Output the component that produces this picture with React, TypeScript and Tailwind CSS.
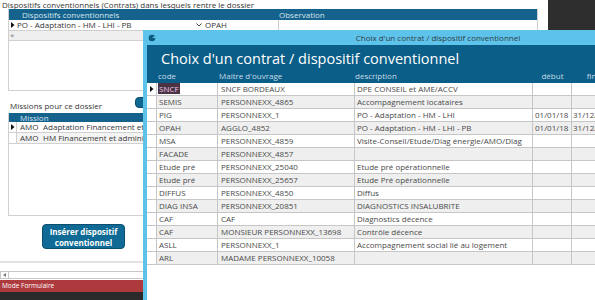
const contracts: [string, string, string, string, string][] = [
  ['SNCF', 'SNCF BORDEAUX', 'DPE CONSEIL et AME/ACCV', '', ''],
  ['SEMIS', 'PERSONNEXX_4865', 'Accompagnement locataires', '', ''],
  ['PIG', 'PERSONNEXX_1', 'PO - Adaptation - HM - LHI', '01/01/18', '31/12/18'],
  ['OPAH', 'AGGLO_4852', 'PO - Adaptation - HM - LHI - PB', '01/01/18', '31/12/18'],
  ['MSA', 'PERSONNEXX_4859', 'Visite-Conseil/Etude/Diag énergie/AMO/Diag', '', ''],
  ['FACADE', 'PERSONNEXX_4857', '', '', ''],
  ['Etude pré', 'PERSONNEXX_25040', 'Etude pré opérationnelle', '', ''],
  ['Etude pré', 'PERSONNEXX_25657', 'Etude Pré opérationnelle', '', ''],
  ['DIFFUS', 'PERSONNEXX_4850', 'Diffus', '', ''],
  ['DIAG INSA', 'PERSONNEXX_20851', 'DIAGNOSTICS INSALUBRITE', '', ''],
  ['CAF', 'CAF', 'Diagnostics décence', '', ''],
  ['CAF', 'MONSIEUR PERSONNEXX_13698', 'Contrôle décence', '', ''],
  ['ASLL', 'PERSONNEXX_1', 'Accompagnement social lié au logement', '', ''],
  ['ARL', 'MADAME PERSONNEXX_10058', '', '', ''],
];

function RowArrow() {
  return (
    <svg width="4" height="6" viewBox="0 0 4 6" className="shrink-0">
      <path d="M0 0 L3.5 3 L0 6 Z" fill="#111" />
    </svg>
  );
}

function MainForm() {
  return (
    <div className="w-[548px] bg-white flex flex-col text-[#363636]">
      <p className="h-[9px] leading-[9px] pl-[2px] whitespace-nowrap">Dispositifs conventionnels (Contrats) dans lesquels rentre le dossier</p>

      {/* contrats subform */}
      <div className="ml-[8px] w-[530px] h-[82px] border-x border-b border-[#d0d0d0] flex flex-col">
        <div className="h-[11px] leading-[11px] bg-[#15628d] text-[#d6e6f0] flex">
          <span className="w-[270px] pl-[13px]">Dispositifs conventionnels</span>
          <span>Observation</span>
        </div>
        <div className="h-[11px] leading-[10px] flex border-b border-[#d0d0d0]">
          <div className="w-[7px] flex items-center justify-center">
            <RowArrow />
          </div>
          <div className="w-[188px] flex items-center justify-between pr-[2px]">
            <span className="pl-[1px] leading-[10px]">PO - Adaptation - HM - LHI - PB</span>
            <svg width="6" height="4" viewBox="0 0 6 4">
              <path d="M0.5 0.5 L3 3 L5.5 0.5" fill="none" stroke="#444" strokeWidth="1" />
            </svg>
          </div>
          <div className="w-[75px] pl-[1px] border-r border-[#d0d0d0]">OPAH</div>
          <div className="flex-1" />
        </div>
        <div className="h-[10px] leading-[10px] bg-[#efefef] border-b border-[#d0d0d0] pl-[1px] text-[#888]">*</div>
      </div>

      {/* missions */}
      <div className="h-[22px] flex">
        <span className="w-[135px] pl-[10px] self-end mb-[2px] leading-[10px]">Missions pour ce dossier</span>
        <div className="mt-[6px] w-[70px] h-[11px] rounded-[4px] bg-[#0e6892] border border-[#0b4d6d]" />
      </div>
      <div className="ml-[8px] w-[530px] h-[103px] border-x border-b border-[#d0d0d0] flex flex-col">
        <div className="h-[9px] leading-[9px] bg-[#15628d] text-[#d6e6f0] pl-[11px]">Mission</div>
        <div className="h-[11px] leading-[10px] flex border-b border-[#d0d0d0] whitespace-nowrap overflow-hidden">
          <div className="w-[8px] flex items-center justify-center border-r border-[#d0d0d0]">
            <RowArrow />
          </div>
          <span className="w-[26px] pl-[3px]">AMO</span>
          <span>Adaptation Financement et administration</span>
        </div>
        <div className="h-[11px] leading-[10px] flex border-b border-[#d0d0d0] bg-[#f4f4f4] whitespace-nowrap overflow-hidden">
          <div className="w-[8px] border-r border-[#d0d0d0] bg-white" />
          <span className="w-[26px] pl-[3px]">AMO</span>
          <span>HM Financement et administration</span>
        </div>
      </div>

      <button className="mt-[8px] ml-[42px] w-[83px] h-[25px] rounded-[4px] bg-[#0f6b95] border border-[#0a4f70] text-white font-bold text-[8px] leading-[11px] flex flex-col items-center justify-center">
        <span>Insérer dispositif</span>
        <span>conventionnel</span>
      </button>

      <div className="mt-[12px] h-[2px] bg-[#e2e2e2]" />

      <div className="mt-[8px] h-[8px] border border-[#c8c8c8] flex">
        <div className="w-[8px] border-r border-[#c8c8c8] flex items-center justify-center">
          <svg width="3" height="4" viewBox="0 0 3 4">
            <path d="M3 0 L0 2 L3 4 Z" fill="#777" />
          </svg>
        </div>
      </div>
    </div>
  );
}

function ContractDialog() {
  return (
    <div className="absolute left-[143px] top-[30px] w-[590px] h-[280px] bg-[#5ec3ea] px-[4px] flex flex-col">
      <div className="h-[15px] flex items-center text-[#2f3d45]">
        <svg width="8" height="8" viewBox="0 0 8 8" className="shrink-0 ml-[1px]">
          <circle cx="4" cy="4" r="3.3" fill="#0c5b80" />
          <path d="M4 4 L7.5 1.2 L7.6 4 Z" fill="#5ec3ea" />
        </svg>
        <span className="flex-1 text-center leading-[15px]">Choix d'un contrat / dispositif conventionnel</span>
        <span className="w-[9px]" />
      </div>

      <div className="flex-1 bg-white flex flex-col">
        <div className="bg-[#0b5e87] pt-[4px] pb-[2px]">
          <h1 className="h-[20px] pl-[14px] text-[14.5px] leading-[20px] text-white font-normal">Choix d'un contrat / dispositif conventionnel</h1>
          <div className="mt-[2px] h-[10px] leading-[10px] flex text-[#c6dcea]">
            <div className="w-[10px]" />
            <div className="w-[61px] pl-[1px]">code</div>
            <div className="w-[137px] pl-[1px]">Maitre d'ouvrage</div>
            <div className="w-[178px]">description</div>
            <div className="w-[39px] text-center">début</div>
            <div className="w-[39px] text-center">fin</div>
          </div>
        </div>

        <div className="flex flex-col text-[#4a4a4a]">
          {contracts.map(([code, owner, desc, start, end], i) => (
            <div
              key={i}
              className={`h-[13px] leading-[12px] flex border-b border-[#c6c6c6] ${i % 2 === 1 ? 'bg-[#efefef]' : 'bg-white'}`}
            >
              <div className="w-[10px] bg-white border-r border-[#c6c6c6] flex items-center justify-center">
                {i === 0 && <RowArrow />}
              </div>
              <div className="w-[61px] pl-[1px] border-r border-[#c6c6c6] whitespace-nowrap overflow-hidden">
                {i === 0 ? (
                  <span className="bg-[#4b3346] text-[#f1c4e4] px-[1px]">{code}</span>
                ) : (
                  <span className="pl-[1px]">{code}</span>
                )}
              </div>
              <div className="w-[137px] pl-[3px] border-r border-[#c6c6c6] whitespace-nowrap overflow-hidden">{owner}</div>
              <div className="w-[178px] pl-[2px] border-r border-[#c6c6c6] whitespace-nowrap overflow-hidden">{desc}</div>
              <div className="w-[39px] pl-[2px] border-r border-[#c6c6c6] whitespace-nowrap overflow-hidden">{start}</div>
              <div className="w-[39px] pl-[1px] border-r border-[#c6c6c6] whitespace-nowrap overflow-hidden">{end}</div>
              <div className="flex-1" />
            </div>
          ))}
        </div>
      </div>
    </div>
  );
}

export default function App() {
  return (
    <div className="relative w-[595px] h-[300px] overflow-hidden bg-[#2a2a2a] font-['Open_Sans',sans-serif] text-[8px]">
      <div className="flex h-[280px]">
        <MainForm />
        <div className="flex-1 bg-[#2e2e2e]" />
      </div>
      <div className="h-[12px] bg-[#ad3a3c] pl-[2px] text-[6.5px] leading-[12px] text-white">Mode Formulaire</div>
      <ContractDialog />
    </div>
  );
}
